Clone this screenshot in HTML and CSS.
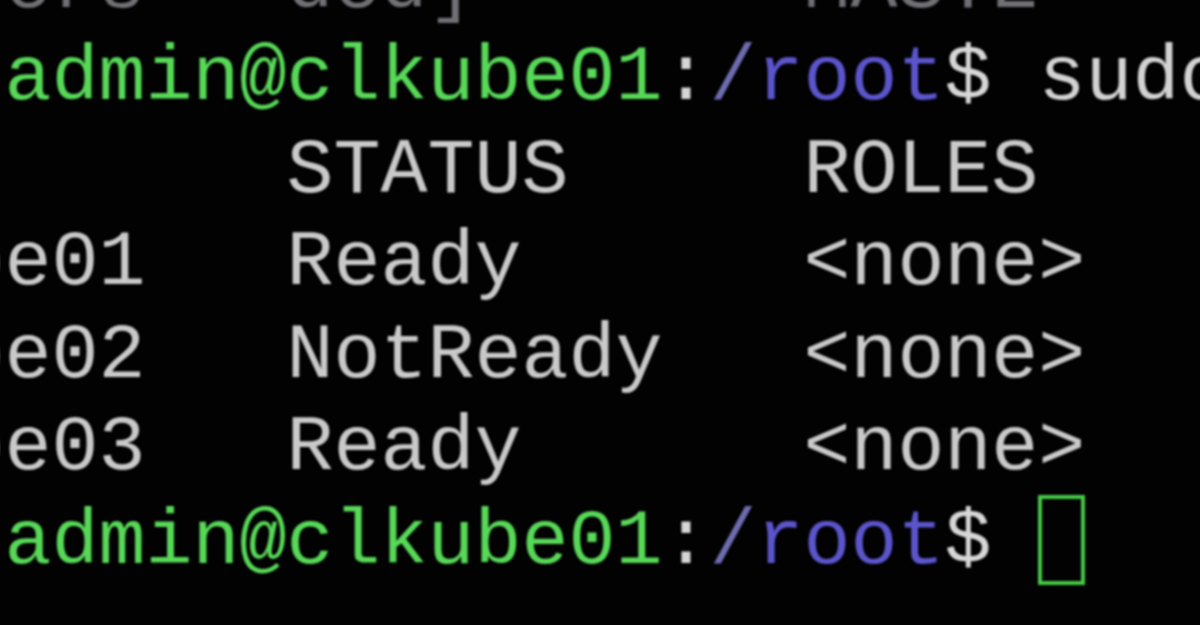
FILE: index.html
```html
<!DOCTYPE html>
<html lang="en">
<head>
<meta charset="utf-8">
<title>Terminal</title>
<link rel="stylesheet" href="styles.css">
</head>
<body>
<div class="screen">
<pre class="term"><div class="line dim">nodesers   ded]       MASTE</div><div class="line"><span class="user">superadmin@clkube01</span><span class="sep">:</span><span class="slash">/</span><span class="path">root</span><span class="sep">$</span> <span class="cmd">sudo kubectl get nodes</span></div><div class="line out">NAME       STATUS     ROLES    AGE   VERSION</div><div class="line out">clkube01   Ready      &lt;none&gt;   12d   v1.18.2</div><div class="line out">clkube02   NotReady   &lt;none&gt;   12d   v1.18.2</div><div class="line out">clkube03   Ready      &lt;none&gt;   12d   v1.18.2</div><div class="line"><span class="user">superadmin@clkube01</span><span class="sep">:</span><span class="slash">/</span><span class="path">root</span><span class="sep">$</span> <span class="cursor"></span></div></pre>
</div>
</body>
</html>
```

FILE: styles.css
```css
html, body {
  margin: 0;
  padding: 0;
  background: #000;
  width: 1200px;
  height: 625px;
  overflow: hidden;
}

.screen {
  width: 1200px;
  height: 625px;
  overflow: hidden;
  background: #020203;
}

.term {
  margin: -59px 0 0 -230.5px;
  padding: 0;
  font-family: "Liberation Mono", "Courier New", monospace;
  font-size: 78.32px;
  line-height: 92.4px;
  white-space: pre;
  color: #cfcfcf;
  filter: blur(0.9px);
}

.line {
  height: 92.4px;
  white-space: pre;
}

.dim {
  color: #6f6f74;
}

.user {
  color: #57d857;
}

.sep {
  color: #d6d6d6;
}

.slash {
  color: #6e6cb0;
}

.path {
  color: #5b55cc;
}

.cmd {
  color: #d2d2d2;
}

.out {
  color: #c9c9c9;
}

.cursor {
  display: inline-block;
  box-sizing: border-box;
  width: 47px;
  height: 90px;
  border: 4px solid #45c845;
  vertical-align: -22px;
}
```
